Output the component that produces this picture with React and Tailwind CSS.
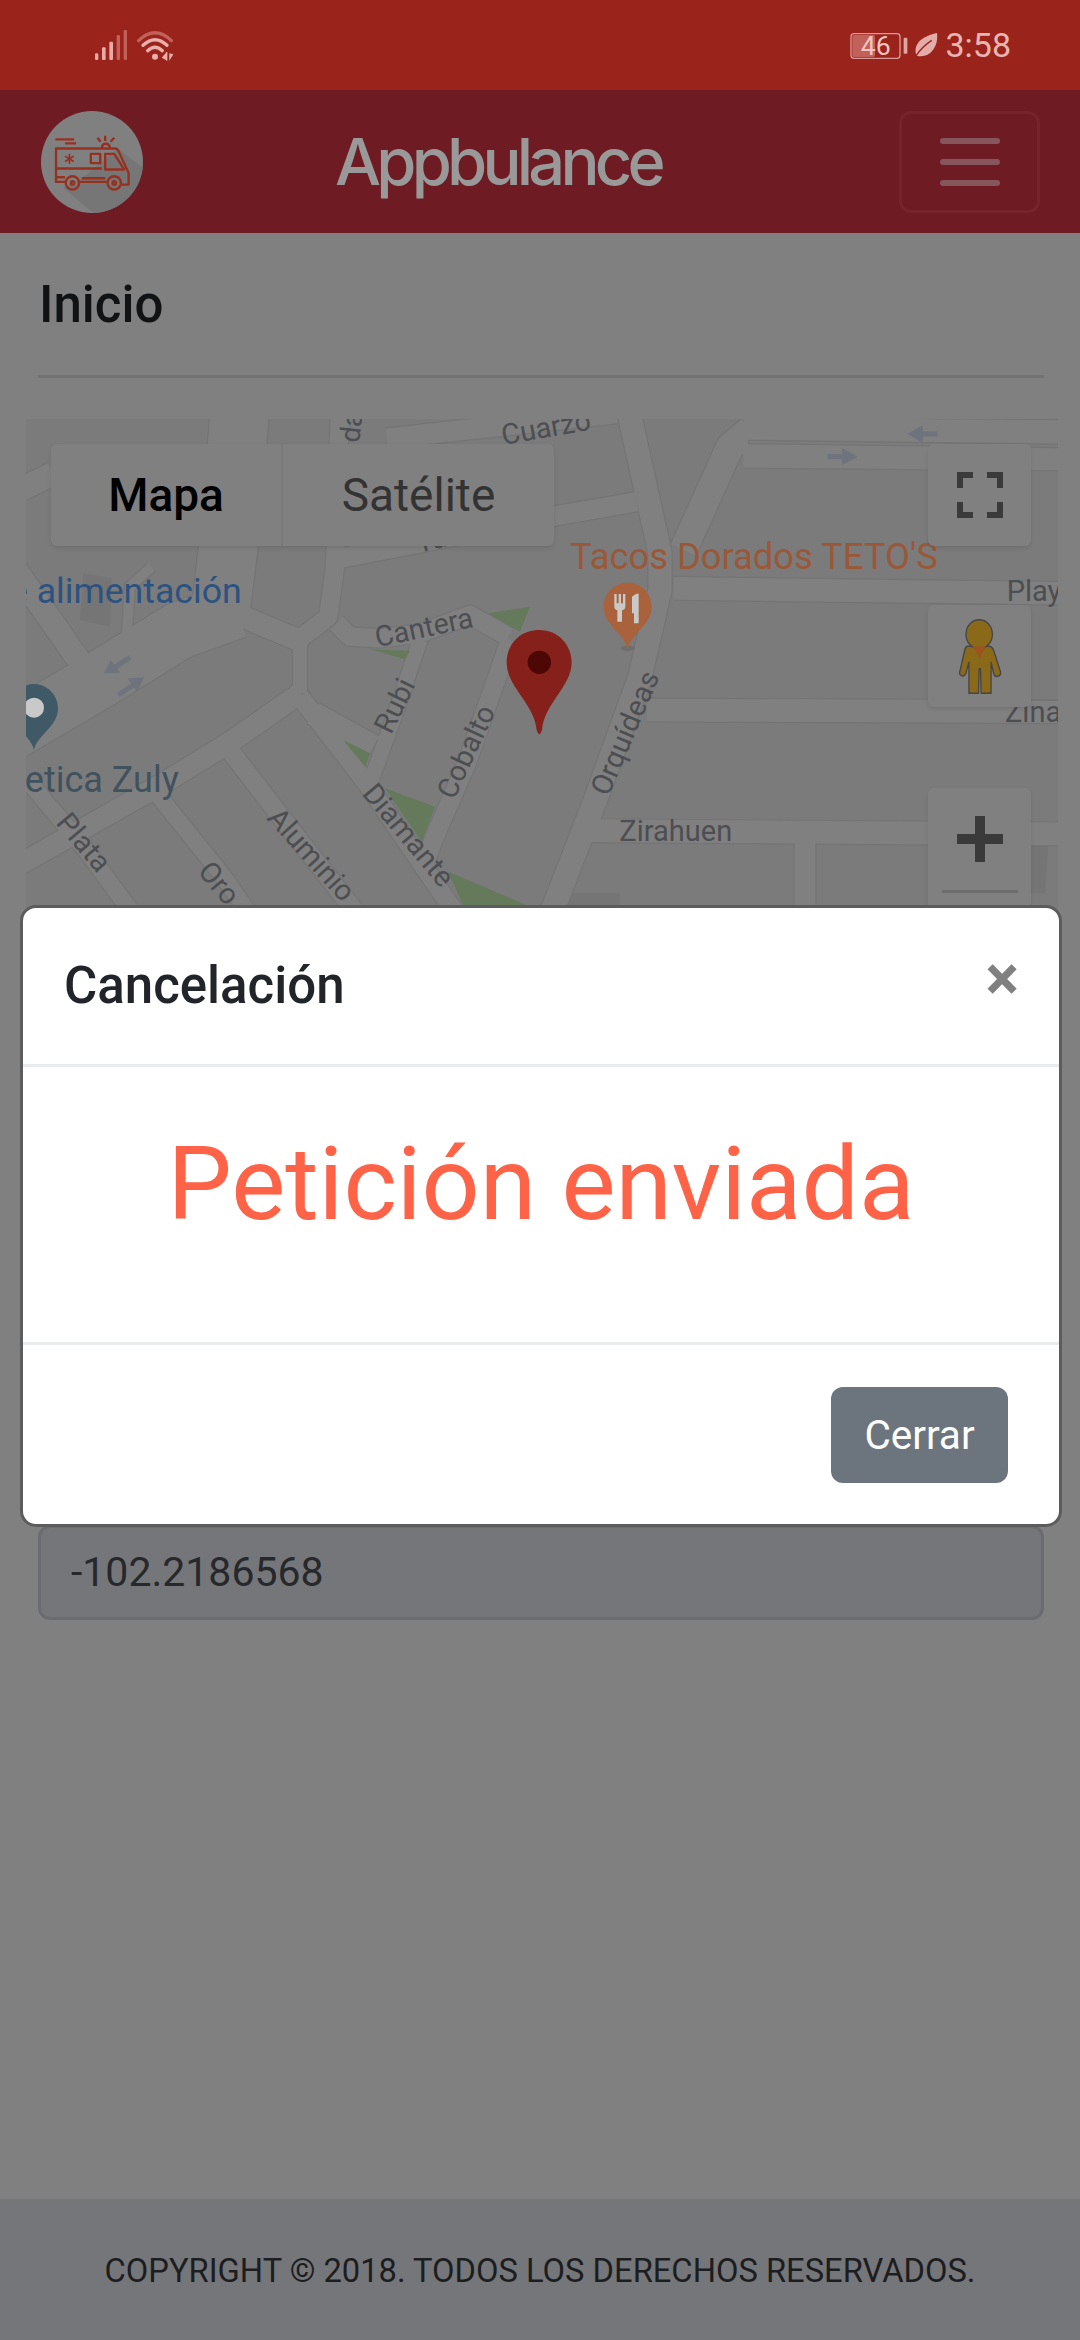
import React from "react";

const roads = [
  ["M-60 985 L230 815 L480 660 L650 600", 170],
  ["M660 0 L625 410 L600 620", 175],
  ["M620 600 L835 690", 65],
  ["M840 680 L840 850", 42],
  ["M835 690 L925 620 L945 470 L960 0", 55],
  ["M950 640 L990 680 L1080 685 L1200 670 L1350 615 L1465 680", 55],
  ["M1470 690 L1425 820 L1340 1060 L1240 1290 L1215 1360", 55],
  ["M1200 690 L1130 900 L1050 1120", 45],
  ["M840 850 L640 990 L430 1120 L200 1250 L-40 1385", 62],
  ["M840 860 L1040 1120 L1300 1500", 55],
  ["M880 910 L1060 1010", 70],
  ["M625 1015 L790 1230 L1010 1510", 55],
  ["M410 1150 L610 1400 L680 1500", 50],
  ["M30 1120 L190 1310 L330 1500", 50],
  ["M-20 470 L190 770", 70],
  ["M-20 250 L100 190", 70],
  ["M320 680 L330 530 L395 470", 30],
  ["M960 445 L1500 340 L1605 318 L1850 275", 58],
  ["M1100 85 L1790 10", 60],
  ["M1825 0 L1920 430 L1920 540 L1860 800 L1730 1160 L1590 1520", 70],
  ["M1990 420 L2130 110 L2190 60", 82],
  ["M2170 98 L3140 106", 150],
  ["M1960 535 L3140 550", 68],
  ["M1880 900 L3140 905", 68],
  ["M1700 1262 L3140 1272", 68],
  ["M2355 1270 L2355 1510", 62],
];

const labels = [
  { t: "da", x: 1018, y: 100, r: -84, s: 84 },
  { t: "Cuarzo", x: 1450, y: 105, r: -10, s: 86 },
  { t: "Ta", x: 1195, y: 430, r: -14, s: 86 },
  { t: "Cantera", x: 1072, y: 712, r: -12, s: 86 },
  { t: "Rubi", x: 1113, y: 976, r: -64, s: 86 },
  { t: "Cobalto", x: 1302, y: 1172, r: -65, s: 86 },
  { t: "Diamante", x: 1024, y: 1152, r: 50, s: 87 },
  { t: "Aluminio", x: 738, y: 1226, r: 48, s: 87 },
  { t: "Oro", x: 530, y: 1385, r: 50, s: 87 },
  { t: "Plata", x: 105, y: 1240, r: 50, s: 87 },
  { t: "Orquídeas", x: 1765, y: 1162, r: -67, s: 87 },
  { t: "Zirahuen", x: 1798, y: 1292, r: 0, s: 87 },
  { t: "Play", x: 2960, y: 572, r: 0, s: 87 },
  { t: "Zina", x: 2955, y: 935, r: 0, s: 87 },
];

function MapCanvas() {
  return (
    <svg viewBox="0 0 3096 1470" className="absolute inset-0 w-full h-full" fontFamily="Roboto, sans-serif">
      <g transform="translate(-18 -27)">
        <polygon points="190,490 275,505 270,650 180,630" fill="#757575" />
        <polygon points="1640,1450 1800,1450 1800,1520 1640,1520" fill="#757575" />
        <polygon points="3030,1300 3085,1300 3075,1450 3030,1450" fill="#757575" />
        {roads.map(([d, w], i) => (
          <path key={"c" + i} d={d} fill="none" stroke="#747474" strokeWidth={w + 7} strokeLinejoin="round" />
        ))}
        {roads.map(([d, w], i) => (
          <path key={"r" + i} d={d} fill="none" stroke="#808080" strokeWidth={w} strokeLinejoin="round" />
        ))}
        <path d="M2190 96 L3140 108" stroke="#747474" strokeWidth="14" strokeLinecap="round" />
        <path d="M2190 96 L3140 108" stroke="#7c7c7c" strokeWidth="6" strokeLinecap="round" />
        <g fill="#65795b">
          <polygon points="1405,610 1530,590 1500,665" />
          <polygon points="1050,718 1170,722 1155,748" />
          <polygon points="970,990 1050,1030 1035,1070" />
          <polygon points="1095,1135 1245,1190 1205,1295" />
          <polygon points="1285,1385 1530,1490 1335,1500" />
        </g>
        <g fill="#6f737d" stroke="#6f737d">
          <path d="M330 742 L285 772" strokeWidth="15" />
          <polygon points="252,790 272,750 300,788" strokeWidth="0" />
          <path d="M295 855 L340 825" strokeWidth="15" />
          <polygon points="373,802 322,805 352,845" strokeWidth="0" />
          <path d="M2752 72 L2690 72" strokeWidth="15" />
          <polygon points="2662,72 2708,46 2708,98" strokeWidth="0" />
          <path d="M2423 140 L2475 140" strokeWidth="15" />
          <polygon points="2513,140 2466,114 2466,166" strokeWidth="0" />
        </g>
        {labels.map((l) => (
          <text key={l.t} x={l.x} y={l.y} fontSize={l.s} fill="#4c4e52" transform={`rotate(${l.r} ${l.x} ${l.y})`}>
            {l.t}
          </text>
        ))}
        <text x="665" y="578" textAnchor="end" fontSize="107" fill="#2b5281">de alimentación</text>
        <text x="476" y="1146" textAnchor="end" fontSize="108" fill="#3f525e">Estetica Zuly</text>
        <text x="1650" y="478" fontSize="109" fill="#9a5838">Tacos Dorados TETO'S</text>

        <path d="M42 822 C2 822 -30 855 -30 895 C-30 950 32 975 42 1020 C52 975 114 950 114 895 C114 855 82 822 42 822 Z" fill="#3f5a66" />
        <circle cx="42" cy="893" r="30" fill="#c9c9c9" />

        <ellipse cx="1823" cy="715" rx="22" ry="8" fill="#6e6e6e" />
        <path d="M1823 518 C1783 518 1751 550 1751 590 C1751 645 1813 670 1823 718 C1833 670 1895 645 1895 590 C1895 550 1863 518 1823 518 Z" fill="#a9623b" />
        <g fill="#c9c9c9">
          <path d="M1783 552 h7 v28 h6 v-28 h7 v28 h6 v-28 h7 v38 q0 8 -10 11 v34 h-14 v-34 q-9 -3 -9 -11 Z" />
          <path d="M1836 560 q18 -14 20 -8 v88 h-14 v-30 h-6 Z" />
        </g>

        <path d="M1558 660 C1498 660 1460 705 1460 757 C1460 830 1543 880 1550 960 Q1558 985 1566 960 C1573 880 1655 830 1655 757 C1655 705 1615 660 1558 660 Z" fill="#85211a" />
        <circle cx="1558" cy="757" r="35" fill="#4d0705" />
      </g>
    </svg>
  );
}

function Ambulance() {
  return (
    <svg viewBox="63 60 305 305" className="w-[102px] h-[102px] rounded-full shrink-0">
      <rect x="63" y="60" width="305" height="305" fill="#808080" />
      <polygon points="292,172 375,235 375,370 225,370 130,290 200,250" fill="#767676" />
      <g fill="none" stroke="#96301f" strokeWidth="7" strokeLinejoin="round">
        <path d="M106 145 H162 M135 157 H168" />
        <path d="M232 140 L241 152 M255 134 V150 M282 140 L271 152" />
        <path d="M245 172 Q245 158 257 158 Q269 158 269 172" />
        <path d="M135 272 H108 V172 H285 Q292 172 295 180 L325 245 V280 H305" />
        <path d="M178 272 H260 M185 261 H255" />
        <path d="M108 232 H245" />
        <path d="M108 258 H135" />
        <rect x="212" y="188" width="28" height="28" />
        <path d="M255 235 V188 H282 L312 235 Z" />
        <circle cx="157" cy="275" r="20" />
        <circle cx="157" cy="275" r="5" />
        <circle cx="282" cy="275" r="20" />
        <circle cx="282" cy="275" r="5" />
        <path d="M148 188 V218 M135 195 L161 211 M161 195 L135 211" strokeWidth="5" />
      </g>
    </svg>
  );
}

function Signal() {
  return (
    <svg viewBox="90 45 360 120" className="w-[120px] h-[40px]">
      <g fill="#e8aaa4">
        <rect x="105" y="130" width="10" height="20" rx="4" />
        <rect x="126" y="112" width="11" height="38" rx="3" />
        <rect x="148" y="95" width="11" height="55" rx="3" />
      </g>
      <g fill="#c2605a">
        <rect x="170" y="75" width="10" height="75" rx="3" />
        <rect x="191" y="60" width="10" height="90" rx="3" />
      </g>
      <g fill="none" strokeLinecap="round">
        <path d="M236 92 Q285 45 334 92" stroke="#c2605a" strokeWidth="10" />
        <path d="M249 106 Q285 72 321 106" stroke="#eab0aa" strokeWidth="10" />
        <path d="M263 122 Q285 102 307 122" stroke="#eab0aa" strokeWidth="10" />
      </g>
      <circle cx="285" cy="140" r="9" fill="#eab0aa" />
      <g fill="#eab0aa">
        <polygon points="318,150 318,128 305,143" />
        <rect x="318" y="126" width="4" height="26" />
        <polygon points="328,130 328,152 340,133" />
      </g>
    </svg>
  );
}

function Battery() {
  return (
    <svg viewBox="40 50 300 110" className="w-[100px] h-[36.7px]" fontFamily="Roboto, sans-serif">
      <rect x="64" y="70" width="147" height="74" rx="9" fill="none" stroke="#dc9893" strokeWidth="4" />
      <rect x="68" y="74" width="68" height="66" rx="5" fill="#c2605a" />
      <text x="138" y="134" textAnchor="middle" fontSize="80" fill="#f0c4c0">46</text>
      <rect x="222" y="82" width="11" height="48" rx="3" fill="#e0a5a0" />
      <path d="M260 136 C248 98 282 76 322 68 C327 108 302 146 260 136 Z" fill="#e3aca8" />
      <path d="M258 138 C272 116 288 102 306 90" stroke="#9a231c" strokeWidth="4" fill="none" />
    </svg>
  );
}

function Pegman() {
  return (
    <svg viewBox="268 203 133 207" preserveAspectRatio="none" className="w-[44px] h-[75px]">
      <g stroke="#45454a" strokeWidth="4" fill="#8a6a18" strokeLinejoin="round">
        <path d="M298 278 L360 278 Q372 278 376 290 L397 350 Q398 360 385 362 Q378 362 375 350 L368 322 L368 408 L338 408 L336 340 L332 340 L330 408 L301 408 L301 322 L292 352 Q288 362 280 360 Q270 358 274 346 L288 290 Q290 278 298 278 Z" />
        <circle cx="332" cy="245" r="40" />
      </g>
      <polygon points="312,278 352,278 334,312" fill="#9c541e" />
    </svg>
  );
}

export default function App() {
  return (
    <div className="relative w-[1080px] h-[2340px] flex flex-col bg-[#808080] overflow-hidden font-[Roboto,sans-serif]">
      <div className="h-[90px] shrink-0 bg-[#9a231c] flex items-center pl-[90px] pr-[69px]">
        <Signal />
        <div className="ml-auto flex items-center">
          <Battery />
          <span className="ml-[2px] text-[34px] leading-[40px] text-[#e8b6b2]">3:58</span>
        </div>
      </div>

      <header className="h-[143px] shrink-0 bg-[#6e1b23] flex items-center pl-[41px] pr-[40px]">
        <Ambulance />
        <span className="ml-[192px] font-[Inter,sans-serif] font-medium text-[65px] leading-none tracking-[-4.8px] text-[#999999]">Appbulance</span>
        <div className="ml-auto w-[141px] h-[102px] rounded-[12px] border-[3px] border-[#78222c] flex flex-col items-center justify-center gap-[15px]">
          <span className="block w-[60px] h-[6px] rounded-full bg-[#85565c]" />
          <span className="block w-[60px] h-[6px] rounded-full bg-[#85565c]" />
          <span className="block w-[60px] h-[6px] rounded-full bg-[#85565c]" />
        </div>
      </header>

      <main className="flex-1 flex flex-col">
        <div className="pl-[38px] pr-[36px]">
          <h1 className="pl-[1px] pt-[42px] text-[51px] leading-[60px] font-medium text-[#111214]">Inicio</h1>
          <div className="mt-[40px] h-[3px] bg-[#737373]" />
        </div>

        <div className="relative mt-[41px] ml-[26px] w-[1032px] h-[490px] bg-[#7b7b7b] overflow-hidden">
          <MapCanvas />
          <div className="absolute left-[25px] top-[25px] h-[102px] flex rounded-[6px] bg-[#808080] shadow-[0_2px_4px_rgba(0,0,0,0.1)] text-[46px]">
            <div className="w-[232px] flex items-center justify-center font-medium text-black border-r-[2px] border-[#7a7a7a]">Mapa</div>
            <div className="w-[271px] flex items-center justify-center text-[#333333]">Satélite</div>
          </div>
          <div className="absolute left-[902px] top-[25px] w-[103px] h-[102px] rounded-[6px] bg-[#808080] shadow-[0_2px_4px_rgba(0,0,0,0.1)] flex items-center justify-center">
            <svg viewBox="0 0 46 46" className="w-[46px] h-[46px]" fill="none" stroke="#3a3a3a" strokeWidth="6">
              <path d="M3 16 V3 H16 M30 3 H43 V16 M3 30 V43 H16 M30 43 H43 V30" />
            </svg>
          </div>
          <div className="absolute left-[902px] top-[186px] w-[103px] h-[102px] rounded-[6px] bg-[#808080] shadow-[0_2px_4px_rgba(0,0,0,0.1)] flex items-center justify-center">
            <Pegman />
          </div>
          <div className="absolute left-[902px] top-[369px] w-[103px] h-[200px] rounded-[6px] bg-[#808080] shadow-[0_2px_4px_rgba(0,0,0,0.1)] flex flex-col items-center">
            <svg viewBox="0 0 46 46" className="mt-[28px] w-[46px] h-[46px]" fill="#3a3a3a">
              <rect x="18" y="0" width="10" height="46" />
              <rect x="0" y="18" width="46" height="10" />
            </svg>
            <div className="mt-[28px] w-[76px] h-[3px] bg-[#6e6e6e]" />
          </div>
        </div>

        <div className="mt-[616px] ml-[38px] mr-[36px] h-[95px] rounded-[12px] border-[3px] border-[#6b6c6f] bg-[#75767a] flex items-center pl-[30px] text-[41px] text-[#26282b]">
          -102.2186568
        </div>

        <footer className="mt-auto h-[141px] bg-[#75767a] flex items-center justify-center pt-[5px] text-[32.7px] text-[#1c1d1f]">
          COPYRIGHT © 2018. TODOS LOS DERECHOS RESERVADOS.
        </footer>
      </main>

      <div className="absolute left-[20px] top-[905px] w-[1042px] h-[622px] rounded-[16px] border-[3px] border-[#5c5c5c] bg-white flex flex-col">
        <div className="h-[159px] shrink-0 border-b-[3px] border-[#e9ecef] flex items-center pl-[41px] pr-[40px]">
          <h2 className="text-[51px] leading-[60px] font-medium text-[#212529]">Cancelación</h2>
          <span className="ml-auto -mt-[16px] text-[63px] leading-none font-bold text-[#808080]">×</span>
        </div>
        <div className="h-[278px] shrink-0 border-b-[3px] border-[#e9ecef] flex justify-center pt-[57px]">
          <p className="text-[102px] leading-[120px] text-[#ff6347]">Petición enviada</p>
        </div>
        <div className="flex-1 flex justify-end items-start pt-[42px] pr-[51px]">
          <button className="w-[177px] h-[96px] rounded-[12px] bg-[#6c757d] text-white text-[40.5px]">Cerrar</button>
        </div>
      </div>
    </div>
  );
}
